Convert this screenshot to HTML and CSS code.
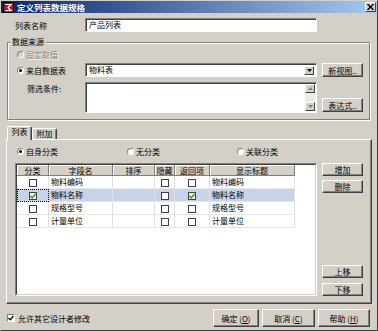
FILE: index.html
```html
<!DOCTYPE html>
<html lang="zh">
<head>
    <meta charset="UTF-8">
    <title>定义列表数据规格</title>
    <link rel="stylesheet" href="styles.css">
</head>
<body>
<div class="window">
    <div class="titlebar">
        <svg class="app-icon" width="11" height="11" viewBox="0 0 11 11">
            <rect x="0" y="0" width="11" height="11" fill="#000"/>
            <rect x="1" y="1" width="9" height="9" fill="#c01818"/>
            <path d="M2.5 2.5 H8 L5 5.5 L8 8.5 H2.5" fill="none" stroke="#fff" stroke-width="1.2"/>
        </svg>
        <span class="title">定义列表数据规格</span>
        <span class="close">
            <svg width="7" height="6" viewBox="0 0 7 6"><path d="M0.5 0 L6.5 6 M6.5 0 L0.5 6" stroke="#000" stroke-width="1.4"/></svg>
        </span>
    </div>

    <div class="content">
        <div class="name-row">
            <span class="name-label">列表名称</span>
            <div class="edit name-edit">产品列表</div>
        </div>

        <div class="group">
            <span class="legend">数据来源</span>
            <div class="group-row row-fixed">
                <span class="opt disabled"><span class="radio"></span>固定取值</span>
            </div>
            <div class="group-row row-source">
                <span class="opt"><span class="radio checked"></span>来自数据表</span>
                <div class="edit combo">
                    <span>物料表</span>
                    <span class="mini-btn">
                        <svg width="5" height="3" viewBox="0 0 5 3"><polygon points="0,0 5,0 2.5,3" fill="#000"/></svg>
                    </span>
                </div>
                <button type="button" class="btn side-btn">新视图..</button>
            </div>
            <div class="group-row row-filter">
                <span class="opt filter-label">筛选条件:</span>
                <div class="edit memo">
                    <div class="vscroll">
                        <span class="mini-btn"><svg width="5" height="3" viewBox="0 0 5 3"><polygon points="0,3 5,3 2.5,0" fill="#808080"/></svg></span>
                        <span class="mini-btn"><svg width="5" height="3" viewBox="0 0 5 3"><polygon points="0,0 5,0 2.5,3" fill="#808080"/></svg></span>
                    </div>
                </div>
                <button type="button" class="btn side-btn">表达式..</button>
            </div>
        </div>

        <div class="tabs">
            <span class="tab active">列表</span>
            <span class="tab">附加</span>
        </div>
        <div class="panel">
            <div class="cat-row">
                <span class="opt"><span class="radio checked"></span>自身分类</span>
                <span class="opt"><span class="radio"></span>无分类</span>
                <span class="opt"><span class="radio"></span>关联分类</span>
            </div>
            <div class="grid-row">
                <div class="grid">
                    <div class="grid-inner">
                        <table>
                            <tr>
                                <th class="c-cat">分类</th>
                                <th class="c-field">字段名</th>
                                <th class="c-sort">排序</th>
                                <th class="c-hide">隐藏</th>
                                <th class="c-ret">返回项</th>
                                <th class="c-title">显示标题</th>
                            </tr>
                            <tr>
                                <td class="mid"><span class="cb"></span></td>
                                <td>物料编码</td>
                                <td></td>
                                <td class="mid"><span class="cb"></span></td>
                                <td class="mid"><span class="cb"></span></td>
                                <td>物料编码</td>
                            </tr>
                            <tr class="sel">
                                <td class="mid focus"><span class="cb on"><svg width="6" height="6" viewBox="0 0 6 6"><path d="M0.5 3 L2.3 4.8 L5.5 1" fill="none" stroke="#1f8a1f" stroke-width="1.3"/></svg></span></td>
                                <td>物料名称</td>
                                <td></td>
                                <td class="mid"><span class="cb"></span></td>
                                <td class="mid"><span class="cb on"><svg width="6" height="6" viewBox="0 0 6 6"><path d="M0.5 3 L2.3 4.8 L5.5 1" fill="none" stroke="#1f8a1f" stroke-width="1.3"/></svg></span></td>
                                <td>物料名称</td>
                            </tr>
                            <tr>
                                <td class="mid"><span class="cb"></span></td>
                                <td>规格型号</td>
                                <td></td>
                                <td class="mid"><span class="cb"></span></td>
                                <td class="mid"><span class="cb"></span></td>
                                <td>规格型号</td>
                            </tr>
                            <tr>
                                <td class="mid"><span class="cb"></span></td>
                                <td>计量单位</td>
                                <td></td>
                                <td class="mid"><span class="cb"></span></td>
                                <td class="mid"><span class="cb"></span></td>
                                <td>计量单位</td>
                            </tr>
                        </table>
                    </div>
                </div>
                <div class="side-btns">
                    <button type="button" class="btn">增加</button>
                    <button type="button" class="btn btn-del">删除</button>
                    <button type="button" class="btn btn-up">上移</button>
                    <button type="button" class="btn btn-down">下移</button>
                </div>
            </div>
        </div>

        <div class="footer">
            <span class="allow">
                <span class="check"><svg width="6" height="6" viewBox="0 0 6 6"><path d="M0.5 3 L2.3 4.8 L5.5 1" fill="none" stroke="#000" stroke-width="1.3"/></svg></span>
                允许其它设计者修改
            </span>
            <div class="footer-btns">
                <button type="button" class="btn btn-ok">确定 (<u>O</u>)</button>
                <button type="button" class="btn btn-cancel">取消 (<u>C</u>)</button>
                <button type="button" class="btn btn-help">帮助 (<u>H</u>)</button>
            </div>
        </div>
    </div>
</div>
</body>
</html>
```

FILE: styles.css
```css
* {
    box-sizing: border-box;
}
body {
    margin: 0;
    background: #d4d0c8;
    font-family: "Noto Sans CJK SC", "Noto Sans", sans-serif;
    font-size: 8px;
    color: #000;
}
.window {
    width: 378px;
    height: 331px;
    background: #d4d0c8;
    border: 1px solid;
    border-color: #d4d0c8 #404040 #404040 #d4d0c8;
    display: flex;
    flex-direction: column;
}

/* title bar */
.titlebar {
    height: 12px;
    display: flex;
    align-items: center;
    padding-left: 2px;
    background: linear-gradient(to right, #0a246a, #a6caf0);
}
.app-icon {
    flex: none;
    margin-right: 3px;
}
.title {
    color: #fff;
    font-weight: bold;
    font-size: 8.5px;
    line-height: 12px;
}
.close {
    margin-left: auto;
    margin-right: 1px;
    width: 11px;
    height: 10px;
    display: flex;
    align-items: center;
    justify-content: center;
    background: #d4d0c8;
    border: 1px solid;
    border-color: #fff #404040 #404040 #fff;
}

.content {
    flex: 1;
    padding: 0 5px;
    display: flex;
    flex-direction: column;
}

/* sunken edits */
.edit {
    background: #fff;
    border: 1px solid;
    border-color: #808080 #fff #fff #808080;
    box-shadow: inset 1px 1px 0 #404040;
    height: 14px;
    line-height: 12px;
    padding-left: 3px;
}
.name-row {
    display: flex;
    align-items: center;
    height: 14px;
    margin-top: 5px;
}
.name-label {
    width: 79px;
    padding-left: 9px;
}
.name-edit {
    width: 232px;
}

/* group box */
.group {
    height: 78px;
    margin: 10px 2px 0 1px;
    padding-left: 9px;
    border: 1px solid #808080;
    box-shadow: inset 1px 1px 0 #fff, 1px 1px 0 #fff;
    display: flex;
    flex-direction: column;
}
.legend {
    align-self: flex-start;
    height: 10px;
    line-height: 10px;
    margin: -6px 0 0 -7px;
    padding: 0 2px;
    background: #d4d0c8;
}
.group-row {
    display: flex;
    align-items: center;
}
.row-fixed {
    height: 9px;
    margin-top: 3px;
}
.row-source {
    height: 14px;
    margin-top: 4px;
}
.row-filter {
    height: 31px;
    margin-top: 5px;
    align-items: flex-start;
}
.opt {
    width: 68px;
    display: flex;
    align-items: center;
    line-height: 9px;
}
.opt.disabled {
    color: #808080;
    text-shadow: 1px 1px 0 #fff;
}
.filter-label {
    padding: 2px 0 0 10px;
}
.radio {
    flex: none;
    width: 7px;
    height: 7px;
    margin-right: 2px;
    border-radius: 50%;
    background: #fff;
    border: 1px solid;
    border-color: #808080 #fff #fff #808080;
    display: flex;
    align-items: center;
    justify-content: center;
}
.disabled .radio {
    background: #d4d0c8;
}
.radio.checked::after {
    content: "";
    width: 3px;
    height: 3px;
    border-radius: 50%;
    background: #000;
}

.combo {
    width: 232px;
    display: flex;
    align-items: center;
    justify-content: space-between;
    padding-right: 2px;
}
.mini-btn {
    width: 10px;
    height: 9px;
    display: flex;
    align-items: center;
    justify-content: center;
    background: #d4d0c8;
    border: 1px solid;
    border-color: #fff #404040 #404040 #fff;
}
.memo {
    width: 232px;
    height: 31px;
    display: flex;
    justify-content: flex-end;
    padding: 1px 1px 1px 0;
}
.vscroll {
    width: 10px;
    display: flex;
    flex-direction: column;
    justify-content: space-between;
    background: #ecebe7;
}

/* buttons */
.btn {
    font: inherit;
    color: #000;
    padding: 0;
    background: #d4d0c8;
    border: 1px solid;
    border-color: #fff #404040 #404040 #fff;
    box-shadow: inset -1px -1px 0 #808080;
    height: 14px;
    line-height: 11px;
}
.side-btn {
    width: 41px;
    margin-left: 5px;
}
.row-filter .side-btn {
    align-self: flex-end;
    margin-bottom: 1px;
}

/* tabs */
.tabs {
    display: flex;
    align-items: flex-end;
    height: 13px;
    margin: 6px 0 0 1px;
    position: relative;
    z-index: 1;
}
.tab {
    width: 25px;
    height: 11px;
    line-height: 10px;
    text-align: center;
    border: 1px solid;
    border-color: #fff #404040 transparent #fff;
    border-bottom: none;
    border-radius: 2px 2px 0 0;
    box-shadow: inset -1px 0 0 #808080;
    background: #d4d0c8;
}
.tab.active {
    height: 14px;
    margin-bottom: -1px;
}
.panel {
    height: 165px;
    padding-left: 8px;
    border: 1px solid;
    border-color: #fff #404040 #404040 #fff;
    box-shadow: inset -1px -1px 0 #808080;
}
.cat-row {
    display: flex;
    align-items: center;
    height: 8px;
    margin-top: 7px;
    padding-left: 2px;
}
.cat-row .opt {
    width: 110px;
}
.grid-row {
    display: flex;
    margin-top: 8px;
}
.grid {
    width: 302px;
    height: 133px;
    border: 1px solid;
    border-color: #808080 #fff #fff #808080;
}
.grid-inner {
    height: 100%;
    background: #fff;
    border: 1px solid;
    border-color: #404040 #d4d0c8 #d4d0c8 #404040;
}
.grid table {
    table-layout: fixed;
    width: 278px;
    border-spacing: 0;
}
.grid th {
    height: 11px;
    padding: 0;
    font-weight: normal;
    line-height: 9px;
    text-align: center;
    white-space: nowrap;
    overflow: hidden;
    background: #d4d0c8;
    border-right: 1px solid #808080;
    border-bottom: 1px solid #808080;
    box-shadow: inset 1px 1px 0 #fff;
}
.c-cat { width: 32px; }
.c-field { width: 64px; }
.c-sort { width: 42px; }
.c-hide { width: 20px; }
.c-ret { width: 35px; }
.c-title { width: 85px; }
.grid td {
    height: 13px;
    padding: 0 0 0 2px;
    line-height: 12px;
    border-right: 1px solid #e0e0e0;
    border-bottom: 1px solid #e6e6e6;
}
.grid td.mid {
    padding: 0;
    text-align: center;
}
.grid tr.sel td {
    background: #c6d3e8;
}
.grid tr.sel td.focus {
    outline: 1px dotted #000;
    outline-offset: -1px;
}
.cb {
    display: inline-flex;
    align-items: center;
    justify-content: center;
    width: 8px;
    height: 8px;
    vertical-align: middle;
    background: #fff;
    border: 1px solid #404040;
}
.cb.on {
    background: #eef3ee;
}
.side-btns {
    width: 41px;
    margin-left: 5px;
    display: flex;
    flex-direction: column;
}
.side-btns .btn {
    height: 13px;
}
.btn-del {
    margin-top: 4px;
}
.btn-up {
    margin-top: auto;
}
.btn-down {
    margin-top: 5px;
}

/* footer */
.footer {
    display: flex;
    align-items: center;
    height: 18px;
    margin-top: 5px;
}
.allow {
    display: flex;
    align-items: center;
    margin-left: 1px;
}
.check {
    width: 8px;
    height: 8px;
    margin-right: 3px;
    display: flex;
    align-items: center;
    justify-content: center;
    background: #fff;
    border: 1px solid;
    border-color: #808080 #fff #fff #808080;
}
.footer-btns {
    margin-left: auto;
    margin-right: 2px;
    display: flex;
    gap: 3px;
}
.footer-btns .btn {
    height: 18px;
    line-height: 15px;
}
.btn-ok { width: 46px; }
.btn-cancel { width: 53px; }
.btn-help { width: 52px; }
```
